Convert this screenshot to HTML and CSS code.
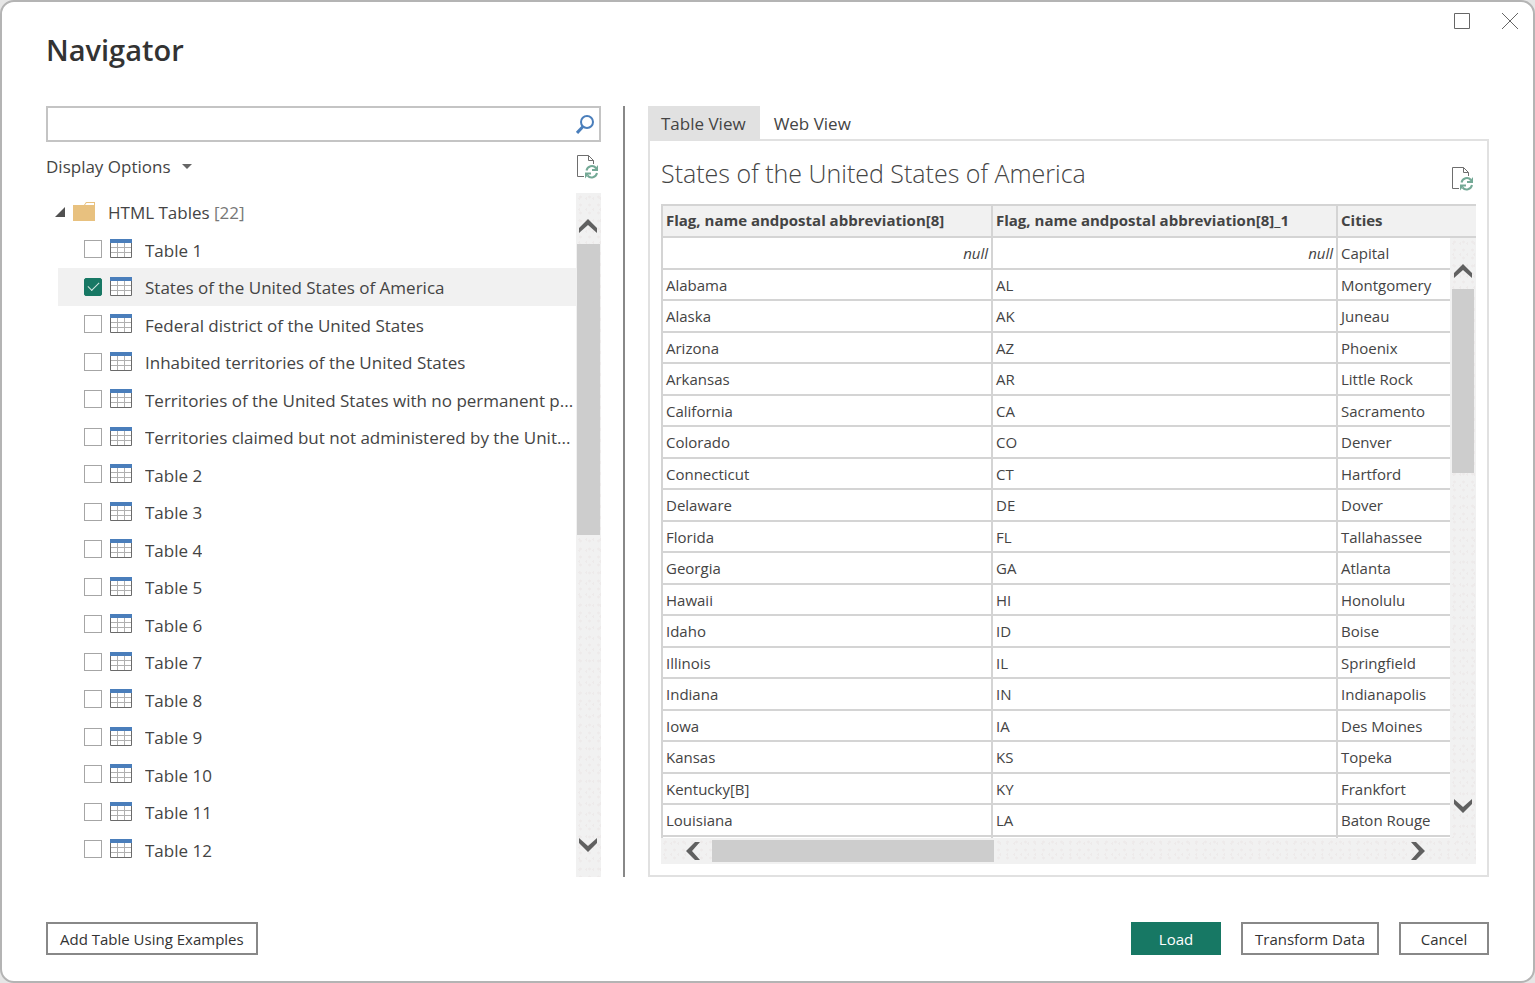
FILE: index.html
```html
<!DOCTYPE html>
<html lang="en">
<head>
    <meta charset="UTF-8">
    <meta name="viewport" content="width=device-width, initial-scale=1.0">
    <title>Navigator</title>
    <link rel="stylesheet" href="styles.css">
</head>
<body>
    <!-- shared icons -->
    <svg class="sprite" aria-hidden="true">
        <symbol id="icon-table" viewBox="0 0 22 19">
            <path fill="#fff" d="M0 0h22v19H0z"/>
            <path stroke="#b0b0b0" fill="none" d="M1 8.5h20M1 13.5h20M7.5 4v14M14.5 4v14"/>
            <path stroke="#6a6a6a" fill="none" d="M.5 3v15.5h21V3"/>
            <path fill="#4a7ebb" d="M0 0h22v4H0z"/>
        </symbol>
        <symbol id="icon-refresh" viewBox="0 0 22 24">
            <path fill="none" stroke="#6e6e6e" d="M7 21.5H.5V.5h11l5 5V9M11.5.5V5.5h5"/>
            <path fill="none" stroke="#74a996" stroke-width="2" d="M9.5 15.5a5.500 5.500 0 0 1 9.500-2.500M20 18a5.500 5.500 0 0 1-9.500 2.500"/>
            <path fill="#74a996" d="M21 10v6h-6v-2h2.500l1.500-1.500zM8 23.500v-6h6v2h-2.500L10 21z"/>
        </symbol>
        <symbol id="icon-chevron" viewBox="0 0 18 14">
            <path fill="#606060" d="M9 0l9 9v5L9 6 0 14V9z"/>
        </symbol>
    </svg>

    <div class="dialog">
        <header class="titlebar">
            <h1>Navigator</h1>
            <div class="window-controls">
                <button type="button" aria-label="Maximize">
                    <svg width="16" height="16" viewBox="0 0 16 16"><path d="M.5.5h15v15H.5z"/></svg>
                </button>
                <button type="button" aria-label="Close">
                    <svg width="18" height="18" viewBox="0 0 18 18"><path d="M1 1l16 16M17 1L1 17"/></svg>
                </button>
            </div>
        </header>

        <main class="content">
            <section class="sources">
                <div class="search">
                    <input type="text" aria-label="Search">
                    <button type="button" aria-label="Search">
                        <svg width="18" height="19" viewBox="0 0 18 19"><circle cx="11" cy="7" r="6"/><path d="M7 11.500L1 18"/></svg>
                    </button>
                </div>
                <div class="options-row">
                    <button type="button" class="display-options">Display Options <span class="caret"></span></button>
                    <button type="button" class="refresh" aria-label="Refresh"><svg><use href="#icon-refresh"/></svg></button>
                </div>
                <div class="tree-area">
                    <div class="tree">
                        <div class="folder">
                            <svg class="expander" viewBox="0 0 10 10"><path d="M10 0v10H0z"/></svg>
                            <svg class="folder-icon" viewBox="0 0 22 19"><path fill="#e8c17f" d="M0 3h11l2-3h9v19H0z"/><path fill="#fff" d="M13.500 1h7.500v2h-9z"/></svg>
                            <span>HTML Tables <span class="count">[22]</span></span>
                        </div>
                        <label class="item"><input type="checkbox"><svg><use href="#icon-table"/></svg><span>Table 1</span></label>
                        <label class="item selected"><input type="checkbox" checked><svg><use href="#icon-table"/></svg><span>States of the United States of America</span></label>
                        <label class="item"><input type="checkbox"><svg><use href="#icon-table"/></svg><span>Federal district of the United States</span></label>
                        <label class="item"><input type="checkbox"><svg><use href="#icon-table"/></svg><span>Inhabited territories of the United States</span></label>
                        <label class="item"><input type="checkbox"><svg><use href="#icon-table"/></svg><span>Territories of the United States with no permanent p...</span></label>
                        <label class="item"><input type="checkbox"><svg><use href="#icon-table"/></svg><span>Territories claimed but not administered by the Unit...</span></label>
                        <label class="item"><input type="checkbox"><svg><use href="#icon-table"/></svg><span>Table 2</span></label>
                        <label class="item"><input type="checkbox"><svg><use href="#icon-table"/></svg><span>Table 3</span></label>
                        <label class="item"><input type="checkbox"><svg><use href="#icon-table"/></svg><span>Table 4</span></label>
                        <label class="item"><input type="checkbox"><svg><use href="#icon-table"/></svg><span>Table 5</span></label>
                        <label class="item"><input type="checkbox"><svg><use href="#icon-table"/></svg><span>Table 6</span></label>
                        <label class="item"><input type="checkbox"><svg><use href="#icon-table"/></svg><span>Table 7</span></label>
                        <label class="item"><input type="checkbox"><svg><use href="#icon-table"/></svg><span>Table 8</span></label>
                        <label class="item"><input type="checkbox"><svg><use href="#icon-table"/></svg><span>Table 9</span></label>
                        <label class="item"><input type="checkbox"><svg><use href="#icon-table"/></svg><span>Table 10</span></label>
                        <label class="item"><input type="checkbox"><svg><use href="#icon-table"/></svg><span>Table 11</span></label>
                        <label class="item"><input type="checkbox"><svg><use href="#icon-table"/></svg><span>Table 12</span></label>
                    </div>
                    <div class="scrollbar vertical">
                        <button type="button" aria-label="Scroll up"><svg class="up"><use href="#icon-chevron"/></svg></button>
                        <div class="track"><div class="thumb tree-thumb"></div></div>
                        <button type="button" aria-label="Scroll down"><svg class="down"><use href="#icon-chevron"/></svg></button>
                    </div>
                </div>
            </section>

            <div class="divider"></div>

            <section class="preview">
                <div class="tabs">
                    <button type="button" class="tab active">Table View</button>
                    <button type="button" class="tab">Web View</button>
                </div>
                <div class="panel">
                    <div class="panel-head">
                        <h2>States of the United States of America</h2>
                        <button type="button" class="refresh" aria-label="Refresh preview"><svg><use href="#icon-refresh"/></svg></button>
                    </div>
                    <div class="grid-area">
                        <div class="grid-view">
                            <table>
                                <thead>
                                    <tr><th class="col-name">Flag, name andpostal abbreviation[8]</th><th class="col-code">Flag, name andpostal abbreviation[8]_1</th><th>Cities</th></tr>
                                </thead>
                                <tbody>
                                    <tr><td class="null">null</td><td class="null">null</td><td>Capital</td></tr>
                                    <tr><td>Alabama</td><td>AL</td><td>Montgomery</td></tr>
                                    <tr><td>Alaska</td><td>AK</td><td>Juneau</td></tr>
                                    <tr><td>Arizona</td><td>AZ</td><td>Phoenix</td></tr>
                                    <tr><td>Arkansas</td><td>AR</td><td>Little Rock</td></tr>
                                    <tr><td>California</td><td>CA</td><td>Sacramento</td></tr>
                                    <tr><td>Colorado</td><td>CO</td><td>Denver</td></tr>
                                    <tr><td>Connecticut</td><td>CT</td><td>Hartford</td></tr>
                                    <tr><td>Delaware</td><td>DE</td><td>Dover</td></tr>
                                    <tr><td>Florida</td><td>FL</td><td>Tallahassee</td></tr>
                                    <tr><td>Georgia</td><td>GA</td><td>Atlanta</td></tr>
                                    <tr><td>Hawaii</td><td>HI</td><td>Honolulu</td></tr>
                                    <tr><td>Idaho</td><td>ID</td><td>Boise</td></tr>
                                    <tr><td>Illinois</td><td>IL</td><td>Springfield</td></tr>
                                    <tr><td>Indiana</td><td>IN</td><td>Indianapolis</td></tr>
                                    <tr><td>Iowa</td><td>IA</td><td>Des Moines</td></tr>
                                    <tr><td>Kansas</td><td>KS</td><td>Topeka</td></tr>
                                    <tr><td>Kentucky[B]</td><td>KY</td><td>Frankfort</td></tr>
                                    <tr><td>Louisiana</td><td>LA</td><td>Baton Rouge</td></tr>
                                    <tr><td></td><td></td><td></td></tr>
                                </tbody>
                            </table>
                            <div class="scrollbar vertical over-grid">
                                <button type="button" aria-label="Scroll up"><svg class="up"><use href="#icon-chevron"/></svg></button>
                                <div class="track"><div class="thumb rows-thumb"></div></div>
                                <button type="button" aria-label="Scroll down"><svg class="down"><use href="#icon-chevron"/></svg></button>
                            </div>
                        </div>
                        <div class="scrollbar horizontal">
                            <button type="button" aria-label="Scroll left"><svg class="left"><use href="#icon-chevron"/></svg></button>
                            <div class="track"><div class="thumb cols-thumb"></div></div>
                            <button type="button" aria-label="Scroll right"><svg class="right"><use href="#icon-chevron"/></svg></button>
                        </div>
                    </div>
                </div>
            </section>
        </main>

        <footer class="actions">
            <button type="button" class="btn">Add Table Using Examples</button>
            <div class="actions-right">
                <button type="button" class="btn primary">Load</button>
                <button type="button" class="btn">Transform Data</button>
                <button type="button" class="btn">Cancel</button>
            </div>
        </footer>
    </div>
</body>
</html>
```

FILE: styles.css
```css
* {
    margin: 0;
    padding: 0;
    box-sizing: border-box;
}

body {
    font-family: "Open Sans", "Noto Sans", sans-serif;
    font-size: 17px;
    color: #444;
    background: #e6e6e6;
}

button {
    font: inherit;
    color: inherit;
    background: none;
    border: none;
    cursor: pointer;
}

svg {
    display: block;
    flex: none;
}

.sprite {
    position: absolute;
    width: 0;
    height: 0;
}

.dialog {
    display: flex;
    flex-direction: column;
    height: 100vh;
    min-height: 600px;
    background: #fff;
    border: 2px solid #b4b4b4;
    border-radius: 14px;
}

/* title bar */
.titlebar {
    display: flex;
    justify-content: space-between;
    height: 104px;
    padding: 10px 14px 0 44px;
}

.titlebar h1 {
    font-size: 29px;
    font-weight: 600;
    line-height: 76px;
    color: #333;
}

.window-controls {
    display: flex;
    align-items: center;
    gap: 31px;
    height: 18px;
}

.window-controls svg {
    fill: none;
    stroke: #666;
}

/* main area */
.content {
    display: flex;
    flex: 1;
    min-height: 0;
    padding: 0 44px;
}

.sources {
    display: flex;
    flex-direction: column;
    flex: 0 0 555px;
}

.divider {
    flex: 0 0 2px;
    margin: 0 23px 0 22px;
    background: #888;
}

.search {
    display: flex;
    align-items: center;
    height: 36px;
    padding-right: 5px;
    border: 2px solid #c4c4c4;
}

.search input {
    flex: 1;
    height: 100%;
    padding: 0 8px;
    font: inherit;
    border: none;
    outline: none;
}

.search svg {
    fill: none;
    stroke: #4a7ebb;
    stroke-width: 2;
}

.search path {
    stroke-width: 3;
}

.options-row {
    display: flex;
    align-items: center;
    justify-content: space-between;
    height: 51px;
    padding: 0 2px 2px 0;
}

.display-options {
    display: flex;
    align-items: center;
    gap: 11px;
}

.caret {
    border: 5px solid transparent;
    border-top-color: #666;
    border-bottom: none;
}

.refresh svg {
    width: 22px;
    height: 24px;
}

/* table list */
.tree-area {
    display: flex;
    flex: 1;
    min-height: 0;
}

.tree {
    display: grid;
    grid-auto-rows: 1fr;
    flex: 1;
    min-width: 0;
    padding: 0 0 9px 12px;
}

.folder,
.item {
    display: flex;
    align-items: center;
    min-width: 0;
    white-space: nowrap;
}

.folder > span,
.item span {
    padding-top: 2px;
}

.expander {
    width: 10px;
    height: 10px;
    margin: 0 8px 0 -3px;
    fill: #505050;
}

.folder-icon {
    width: 22px;
    height: 19px;
    margin-right: 13px;
}

.count {
    color: #777;
}

.item {
    padding-left: 26px;
}

.item.selected {
    background: #f1f1f1;
}

.item input {
    flex: none;
    width: 18px;
    height: 18px;
    margin-right: 8px;
    appearance: none;
    background: #fff;
    border: 1px solid #a6a6a6;
}

.item input:checked {
    display: grid;
    place-items: center;
    background: #177864;
    border-color: #177864;
    border-radius: 2px;
}

.item input:checked::after {
    content: "";
    width: 10px;
    height: 5px;
    margin-bottom: 3px;
    border: solid #d5e8e3;
    border-width: 0 0 1px 1px;
    transform: rotate(-45deg);
}

.item svg {
    width: 22px;
    height: 19px;
    margin: 0 13px 1px 0;
}

.item span {
    overflow: hidden;
    text-overflow: ellipsis;
}

/* scrollbars */
.scrollbar {
    display: flex;
    background-color: #f1f1f1;
    background-image:
        radial-gradient(#edeaea 1px, transparent 2px),
        radial-gradient(#edeaea 1px, transparent 1px);
    background-size: 9px 8px, 7px 11px;
}

.scrollbar button {
    display: flex;
    align-items: center;
    justify-content: center;
    flex: 0 0 51px;
}

.scrollbar svg {
    width: 18px;
    height: 14px;
}

.track {
    flex: 1;
}

.thumb {
    background: #cdcdcd;
}

.vertical {
    flex-direction: column;
    flex-shrink: 0;
    width: 25px;
}

.vertical .track {
    padding: 0 1px;
}

.vertical button {
    padding-right: 1px;
}

.vertical button:first-child {
    padding-top: 14px;
}

.vertical button:last-child {
    padding-bottom: 14px;
}

.horizontal {
    height: 26px;
    padding-right: 26px;
}

.horizontal .track {
    padding: 2px 0;
}

.horizontal button:first-child {
    padding-left: 12px;
}

.horizontal button:last-child {
    padding-right: 14px;
}

.down {
    transform: rotate(180deg);
}

.left {
    transform: rotate(-90deg);
}

.right {
    transform: rotate(90deg);
}

.tree-thumb {
    height: 50%;
}

.rows-thumb {
    height: 37%;
}

.cols-thumb {
    width: 41%;
    height: 100%;
}

/* preview */
.preview {
    display: flex;
    flex-direction: column;
    flex: 1;
    min-width: 0;
}

.tabs {
    display: flex;
    height: 33px;
}

.tab {
    padding: 1px 14px 0 13px;
}

.tab.active {
    background: #e1e1e1;
}

.tab + .tab {
    padding-left: 14px;
}

.panel {
    display: flex;
    flex-direction: column;
    flex: 1;
    min-height: 0;
    padding: 0 11px 11px;
    border: 2px solid #e1e1e1;
}

.panel-head {
    display: flex;
    align-items: center;
    justify-content: space-between;
    flex: 0 0 63px;
    padding-right: 2px;
}

.panel-head h2 {
    font-size: 25px;
    font-weight: 300;
}

.panel-head .refresh {
    padding-top: 12px;
}

.grid-area {
    display: flex;
    flex-direction: column;
    flex: 1;
    min-height: 0;
}

.grid-view {
    position: relative;
    flex: 1;
    min-height: 0;
    overflow: hidden;
}

.over-grid {
    position: absolute;
    top: 34px;
    right: 0;
    bottom: 0;
    width: 26px;
}

.over-grid .track {
    padding: 0 2px;
}

table {
    width: 100%;
    table-layout: fixed;
    border-spacing: 0;
    border: solid #d4d4d4;
    border-width: 2px 0 0 2px;
    font-size: 15px;
    line-height: 20px;
}

th,
td {
    height: 31px;
    padding: 0 3px;
    text-align: left;
    border: solid #d4d4d4;
    border-width: 0 2px 2px 0;
}

th:last-child,
td:last-child {
    border-right: none;
}

th {
    height: 32px;
    padding-bottom: 2px;
    font-weight: 700;
    background: #f1f1f1;
}

tr:nth-child(odd) td {
    height: 32px;
}

.col-name {
    width: 330px;
}

.col-code {
    width: 345px;
}

td.null {
    text-align: right;
    font-style: italic;
}

/* footer */
.actions {
    display: flex;
    justify-content: space-between;
    padding: 45px 44px 26px;
}

.actions-right {
    display: flex;
    gap: 20px;
}

.btn {
    min-width: 90px;
    height: 33px;
    padding: 0 12px;
    font-size: 15px;
    color: #333;
    background: #fff;
    border: 2px solid #888;
}

.btn.primary {
    color: #fff;
    background: #177864;
    border-color: #177864;
}
```
